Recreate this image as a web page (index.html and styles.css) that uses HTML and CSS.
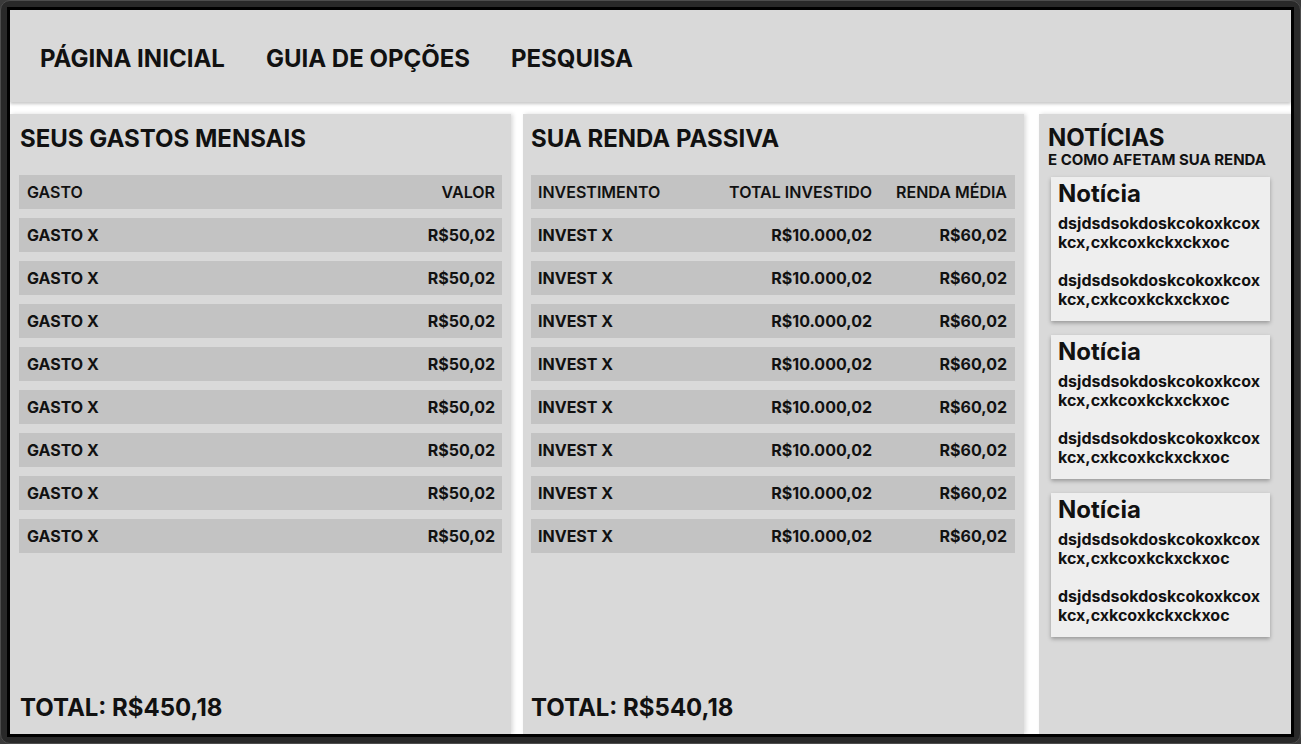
FILE: index.html
```html
<!DOCTYPE html>
<html lang="pt-BR">
<head>
<meta charset="utf-8">
<title>Finanças</title>
<link rel="stylesheet" href="styles.css">
</head>
<body>
<div class="frame">
  <div class="screen">
    <nav class="nav">
      <a class="nav-link" href="#">PÁGINA INICIAL</a>
      <a class="nav-link" href="#">GUIA DE OPÇÕES</a>
      <a class="nav-link" href="#">PESQUISA</a>
    </nav>
    <main class="content">
      <section class="panel panel-gastos">
        <h2 class="panel-title">SEUS GASTOS MENSAIS</h2>
        <div class="table">
          <div class="row row-head"><span>GASTO</span><span class="num">VALOR</span></div>
          <div class="row"><span>GASTO X</span><span class="num">R$50,02</span></div>
          <div class="row"><span>GASTO X</span><span class="num">R$50,02</span></div>
          <div class="row"><span>GASTO X</span><span class="num">R$50,02</span></div>
          <div class="row"><span>GASTO X</span><span class="num">R$50,02</span></div>
          <div class="row"><span>GASTO X</span><span class="num">R$50,02</span></div>
          <div class="row"><span>GASTO X</span><span class="num">R$50,02</span></div>
          <div class="row"><span>GASTO X</span><span class="num">R$50,02</span></div>
          <div class="row"><span>GASTO X</span><span class="num">R$50,02</span></div>
        </div>
        <p class="total">TOTAL: R$450,18</p>
      </section>

      <section class="panel panel-renda">
        <h2 class="panel-title">SUA RENDA PASSIVA</h2>
        <div class="table">
          <div class="row row3 row-head"><span>INVESTIMENTO</span><span class="num">TOTAL INVESTIDO</span><span class="num">RENDA MÉDIA</span></div>
          <div class="row row3"><span>INVEST X</span><span class="num">R$10.000,02</span><span class="num">R$60,02</span></div>
          <div class="row row3"><span>INVEST X</span><span class="num">R$10.000,02</span><span class="num">R$60,02</span></div>
          <div class="row row3"><span>INVEST X</span><span class="num">R$10.000,02</span><span class="num">R$60,02</span></div>
          <div class="row row3"><span>INVEST X</span><span class="num">R$10.000,02</span><span class="num">R$60,02</span></div>
          <div class="row row3"><span>INVEST X</span><span class="num">R$10.000,02</span><span class="num">R$60,02</span></div>
          <div class="row row3"><span>INVEST X</span><span class="num">R$10.000,02</span><span class="num">R$60,02</span></div>
          <div class="row row3"><span>INVEST X</span><span class="num">R$10.000,02</span><span class="num">R$60,02</span></div>
          <div class="row row3"><span>INVEST X</span><span class="num">R$10.000,02</span><span class="num">R$60,02</span></div>
        </div>
        <p class="total">TOTAL: R$540,18</p>
      </section>

      <aside class="panel panel-news">
        <h2 class="panel-title news-title">NOTÍCIAS</h2>
        <p class="news-sub">E COMO AFETAM SUA RENDA</p>
        <div class="cards">
          <article class="card">
            <h3 class="card-title">Notícia</h3>
            <p class="card-text">dsjdsdsokdoskcokoxkcox<br>kcx,cxkcoxkckxckxoc</p>
            <p class="card-text">dsjdsdsokdoskcokoxkcox<br>kcx,cxkcoxkckxckxoc</p>
          </article>
          <article class="card">
            <h3 class="card-title">Notícia</h3>
            <p class="card-text">dsjdsdsokdoskcokoxkcox<br>kcx,cxkcoxkckxckxoc</p>
            <p class="card-text">dsjdsdsokdoskcokoxkcox<br>kcx,cxkcoxkckxckxoc</p>
          </article>
          <article class="card">
            <h3 class="card-title">Notícia</h3>
            <p class="card-text">dsjdsdsokdoskcokoxkcox<br>kcx,cxkcoxkckxckxoc</p>
            <p class="card-text">dsjdsdsokdoskcokoxkcox<br>kcx,cxkcoxkckxckxoc</p>
          </article>
        </div>
      </aside>
    </main>
  </div>
</div>
</body>
</html>
```
FILE: styles.css
```css
* { box-sizing: border-box; }

html, body {
  margin: 0;
  padding: 0;
  background: #3a3a3a;
  font-family: Inter, "Liberation Sans", Arial, sans-serif;
  color: #111;
}

.frame {
  width: 1301px;
  height: 744px;
  border: 1px solid #4d4d4d;
  border-radius: 10px;
  background: #292929;
  padding: 6px;
}

.screen {
  height: 100%;
  border: 3px solid #000;
  background: #fff;
  display: flex;
  flex-direction: column;
}

.nav {
  height: 92px;
  flex: none;
  background: #d9d9d9;
  display: flex;
  align-items: center;
  gap: 41px;
  padding: 4px 0 0 30px;
  box-shadow: 0 2px 3px rgba(0, 0, 0, 0.22);
  position: relative;
  z-index: 2;
}

.nav-link {
  font-size: 24px;
  font-weight: 700;
  color: #111;
  text-decoration: none;
}

.content {
  flex: 1;
  display: flex;
  gap: 12px;
  padding-top: 12px;
  min-height: 0;
}

.panel {
  background: #d9d9d9;
  display: flex;
  flex-direction: column;
  box-shadow: 2px 0 4px rgba(0, 0, 0, 0.14);
}

.panel-gastos {
  width: 501px;
  padding: 10px 9px 12px 9px;
}

.panel-renda {
  width: 501px;
  padding: 10px 9px 12px 8px;
}

.panel-news {
  flex: 1;
  margin-left: 3px;
  padding: 10px 0 0 9px;
}

.panel-title {
  margin: 0 0 22px 1px;
  font-size: 24px;
  font-weight: 700;
  line-height: 29px;
}

.panel-renda .panel-title,
.panel-renda .total {
  margin-left: 0;
}

.table {
  display: flex;
  flex-direction: column;
  gap: 9px;
}

.row {
  height: 34px;
  background: #c3c3c3;
  display: flex;
  align-items: center;
  justify-content: space-between;
  padding: 0 7px 0 8px;
  font-size: 16px;
  font-weight: 700;
  white-space: nowrap;
}

.row-head {
  font-weight: 600;
}

.row3 {
  display: grid;
  grid-template-columns: 1fr 143px 112px;
  column-gap: 23px;
  padding: 0 8px 0 7px;
}

.num {
  text-align: right;
}

.total {
  margin: auto 0 0 1px;
  font-size: 24px;
  font-weight: 700;
  line-height: 29px;
}

.news-title {
  margin: 0;
  line-height: 27px;
}

.news-sub {
  margin: 0 0 8px 0;
  font-size: 15px;
  font-weight: 700;
  line-height: 18px;
}

.cards {
  display: flex;
  flex-direction: column;
  gap: 14px;
  padding-left: 3px;
}

.card {
  width: 219px;
  background: #eeeeee;
  box-shadow: 0 2px 4px rgba(0, 0, 0, 0.3);
  padding: 2px 7px 12px 7px;
}

.card-title {
  margin: 0 0 6px 0;
  font-size: 24px;
  font-weight: 700;
  line-height: 29px;
}

.card-text {
  margin: 0;
  font-size: 16px;
  font-weight: 700;
  line-height: 19px;
}

.card-text + .card-text {
  margin-top: 19px;
}
```
